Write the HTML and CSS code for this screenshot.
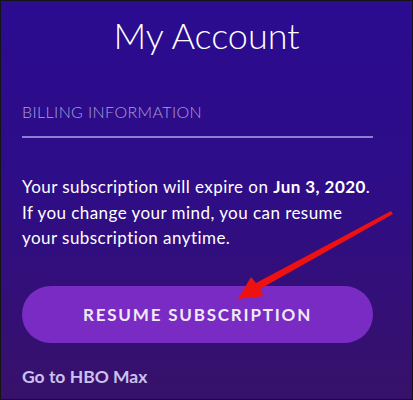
FILE: index.html
```html
<!DOCTYPE html>
<html>
<head>
<meta charset="utf-8">
<link rel="stylesheet" href="styles.css">
</head>
<body>
<div class="screen">
  <h1 class="title">My Account</h1>
  <div class="section-label">BILLING INFORMATION</div>
  <div class="divider"></div>
  <p class="message">Your subscription will expire on <strong>Jun 3, 2020</strong>.<br>If you change your mind, you can resume<br>your subscription anytime.</p>
  <button class="resume-btn">RESUME SUBSCRIPTION</button>
  <a class="hbo-link">Go to HBO Max</a>
  <svg class="annotation" width="413" height="400" viewBox="0 0 413 400">
    <polygon points="391,211 393,214 260,289 264,296 238,299 251,277 256,283" fill="#ee1111"/>
  </svg>
</div>
</body>
</html>
```

FILE: styles.css
```css
* { box-sizing: border-box; }
html, body { margin: 0; padding: 0; }
body { font-family: "Lato", "Open Sans", sans-serif; }
.screen {
  position: relative;
  width: 413px;
  height: 400px;
  border: 1px solid #141414;
  background: linear-gradient(180deg, #2b0b90 0%, #2e0d88 45%, #371169 100%);
  padding: 0 39px 0 21px;
  display: flex;
  flex-direction: column;
  overflow: hidden;
}
.title {
  margin: 12px 0 0 18px;
  text-align: center;
  font-weight: 300;
  font-size: 36px;
  line-height: 44px;
  color: #ffffff;
}
.section-label {
  margin-top: 45px;
  font-size: 16px;
  font-weight: 300;
  color: #a99fd6;
  letter-spacing: 0.4px;
  line-height: 20px;
}
.divider {
  margin-top: 14px;
  height: 2px;
  width: 351px;
  background: #8a7fd1;
}
.message {
  margin: 36px 0 0;
  width: 370px;
  font-size: 17px;
  line-height: 25.5px;
  letter-spacing: 0.45px;
  color: #ffffff;
  white-space: nowrap;
}
.message strong { font-weight: 700; }
.resume-btn {
  margin-top: 35px;
  width: 351px;
  height: 57px;
  border: none;
  border-radius: 29px;
  background: #7a2bc4;
  color: #f0eaf8;
  font-family: "Lato", sans-serif;
  font-weight: 700;
  font-size: 17px;
  letter-spacing: 1.8px;
}
.hbo-link {
  margin-top: 23px;
  font-size: 17.5px;
  font-weight: 700;
  color: #c9c1ee;
}
.annotation {
  position: absolute;
  left: -1px;
  top: -1px;
}
```
